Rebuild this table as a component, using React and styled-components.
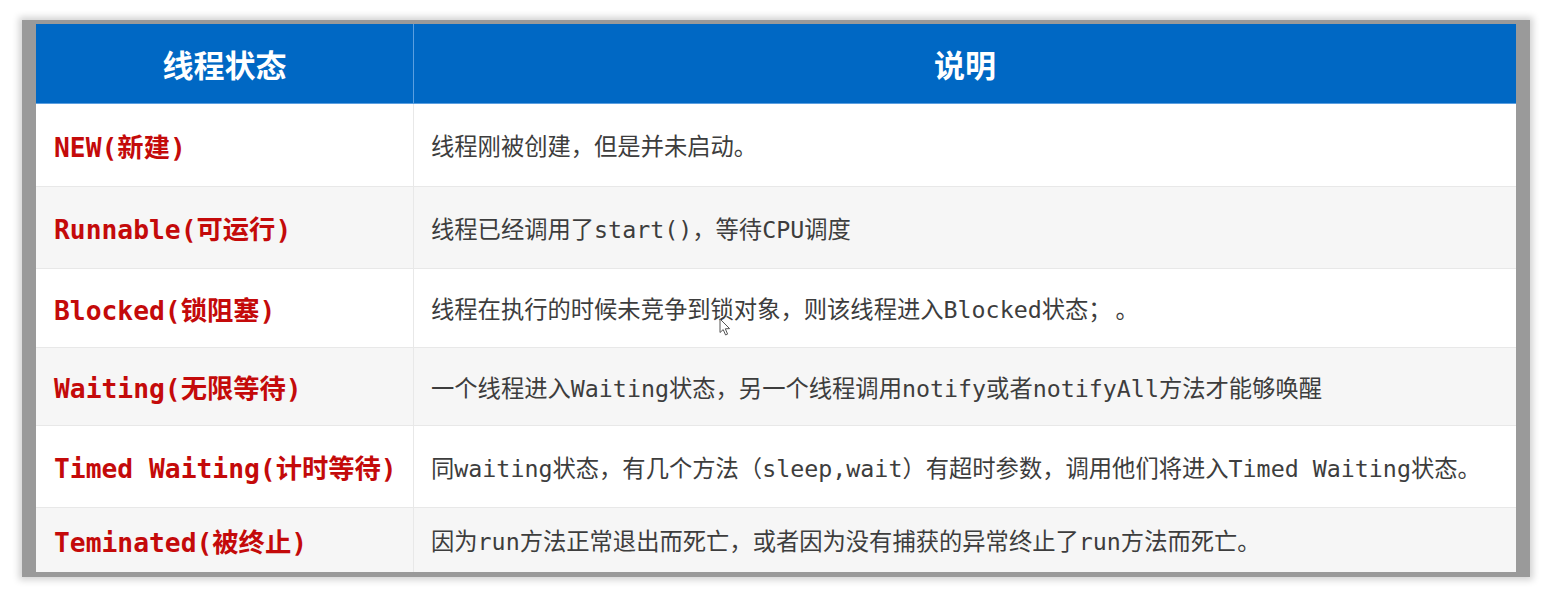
import React from "react";
import styled, { createGlobalStyle } from "styled-components";

const rows = [
  {
    state: "NEW(新建)",
    desc: ["线程刚被创建，但是并未启动。"],
    height: 82,
  },
  {
    state: "Runnable(可运行)",
    desc: ["线程已经调用了start()，等待CPU调度"],
    height: 82,
  },
  {
    state: "Blocked(锁阻塞)",
    desc: ["线程在执行的时候未竞争到锁对象，则该线程进入Blocked状态", "；", "。"],
    height: 79,
    cursor: true,
  },
  {
    state: "Waiting(无限等待)",
    desc: ["一个线程进入Waiting状态，另一个线程调用notify或者notifyAll方法才能够唤醒"],
    height: 78,
  },
  {
    state: "Timed Waiting(计时等待)",
    desc: ["同waiting状态，有几个方法（sleep,wait）有超时参数，调用他们将进入Timed Waiting状态。"],
    height: 82,
  },
  {
    state: "Teminated(被终止)",
    desc: ["因为run方法正常退出而死亡，或者因为没有捕获的异常终止了run方法而死亡。"],
    height: 65,
  },
];

const App = () => (
  <>
    <GlobalStyle />
    <Page>
      <Frame>
        <Table>
          <HeaderRow>
            <HeaderCell>线程状态</HeaderCell>
            <HeaderCell $last>说明</HeaderCell>
          </HeaderRow>

          {rows.map((row, i) => (
            <Row key={row.state} $height={row.height} $striped={i % 2 === 1}>
              <StateCell>{row.state}</StateCell>
              <DescCell>
                {row.desc.map((part, j) =>
                  j === 1 ? <Punct key={j}>{part}</Punct> : <span key={j}>{part}</span>
                )}
                {row.cursor && (
                  <Cursor viewBox="0 0 12 18" width="12" height="18">
                    <path
                      d="M1 1 L1 14.5 L4.2 11.6 L6.6 17 L8.6 16.1 L6.3 10.8 L10.6 10.6 Z"
                      fill="#fff"
                      stroke="#555"
                      strokeWidth="1"
                      strokeLinejoin="round"
                    />
                  </Cursor>
                )}
              </DescCell>
            </Row>
          ))}
        </Table>
      </Frame>
    </Page>
  </>
);

const GlobalStyle = createGlobalStyle`
  html, body {
    margin: 0;
    padding: 0;
    background: #ffffff;
  }

  body {
    font-family: "DejaVu Sans Mono", "Noto Sans CJK SC", monospace;
  }
`;

const Page = styled.div`
  width: 1544px;
  height: 590px;
  padding: 20px 0 0 22px;
  box-sizing: border-box;
  background: #ffffff;
`;

const Frame = styled.div`
  display: inline-block;
  padding: 4px 14px 5px 14px;
  background: #9a9a9a;
  box-shadow: 0 0 7px 3px rgba(0, 0, 0, 0.18);
`;

const Table = styled.div`
  width: 1480px;
  background: #ffffff;
  display: flex;
  flex-direction: column;
`;

const HeaderRow = styled.div`
  display: grid;
  grid-template-columns: 378px 1fr;
  height: 80px;
  background: #0068c4;
  border-bottom: 1px solid #5b9fe0;
  box-sizing: border-box;
`;

const HeaderCell = styled.div`
  display: flex;
  align-items: center;
  justify-content: center;
  color: #ffffff;
  font-family: "Noto Sans CJK SC", sans-serif;
  font-weight: 700;
  font-size: 31px;
  border-right: ${({ $last }) => ($last ? "none" : "1px solid #5b9fe0")};
`;

const Row = styled.div`
  display: grid;
  grid-template-columns: 378px 1fr;
  height: ${({ $height }) => $height}px;
  background: ${({ $striped }) => ($striped ? "#f6f6f6" : "#ffffff")};
  border-top: 1px solid #e8e8e8;
  box-sizing: border-box;

  &:nth-child(2) {
    border-top: none;
  }
`;

const StateCell = styled.div`
  display: flex;
  align-items: center;
  padding-left: 18px;
  color: #c40a0a;
  font-family: "DejaVu Sans Mono", "Noto Sans CJK SC", monospace;
  font-weight: 700;
  font-size: 26.3px;
  border-right: 1px solid #e8e8e8;
  white-space: nowrap;
`;

const DescCell = styled.div`
  position: relative;
  display: flex;
  align-items: center;
  padding-left: 17px;
  color: #3d3d3d;
  font-family: "DejaVu Sans Mono", "Noto Sans CJK SC", monospace;
  font-size: 23.3px;
  white-space: nowrap;
`;

const Punct = styled.span`
  font-family: "Noto Sans CJK SC", sans-serif;
  margin-right: 4px;
`;

const Cursor = styled.svg`
  position: absolute;
  left: 305px;
  top: 49px;
`;

export default App;
